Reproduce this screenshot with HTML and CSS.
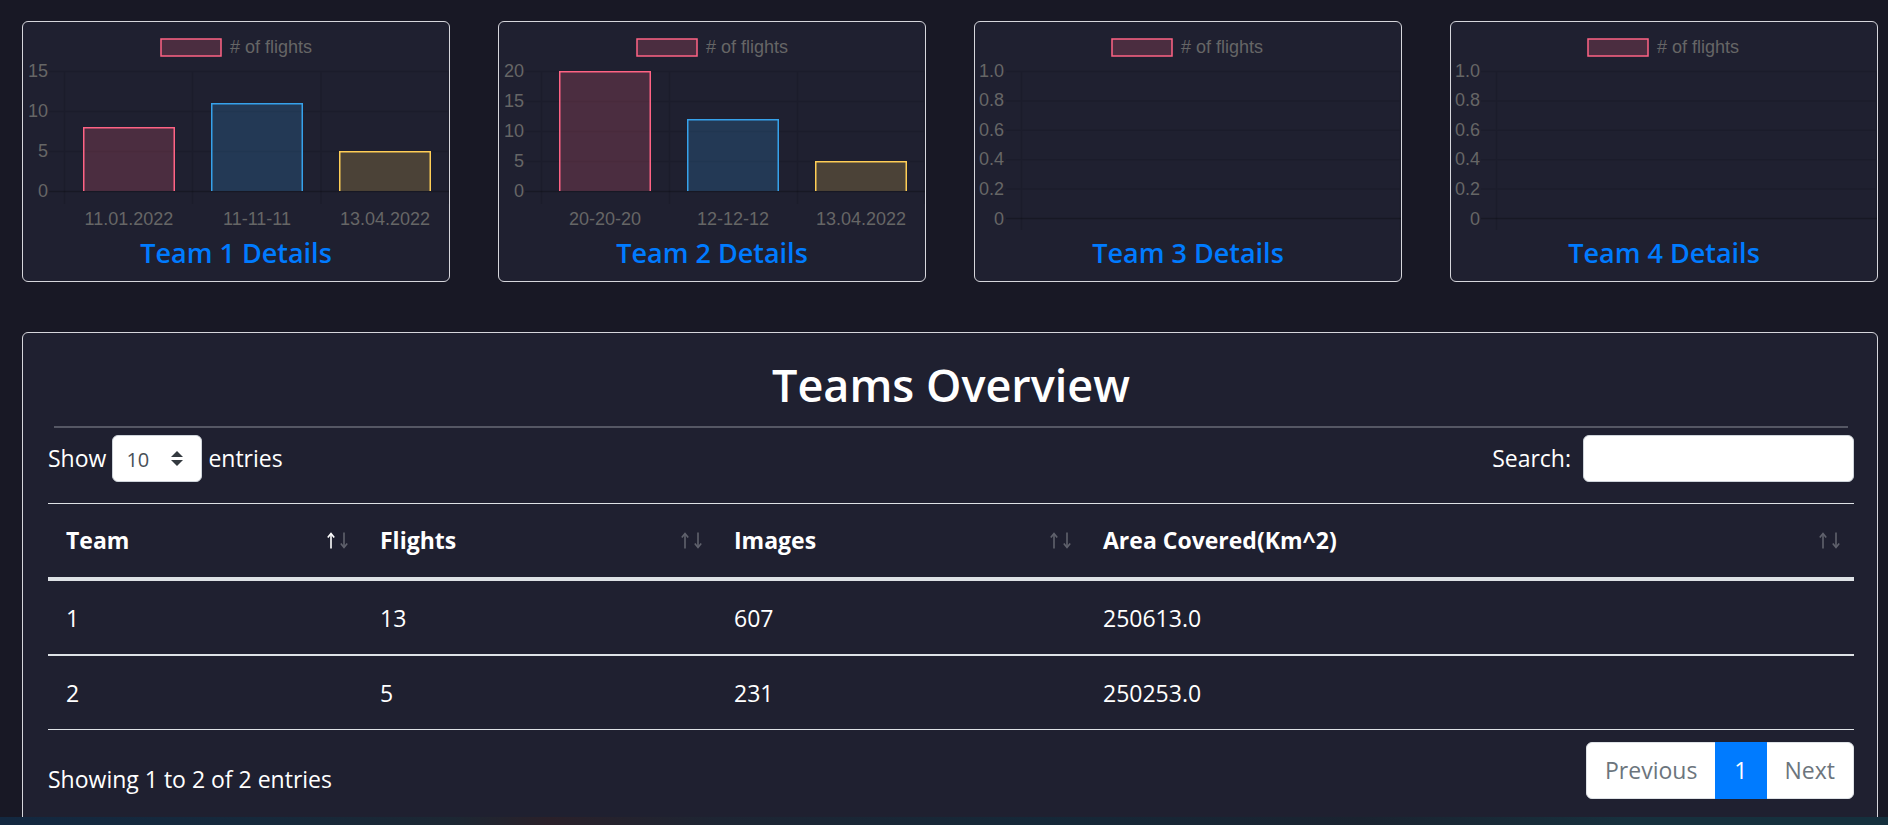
FILE: index.html
```html
<!DOCTYPE html>
<html lang="en">
<head>
<meta charset="utf-8">
<title>Teams Overview</title>
<link rel="stylesheet" href="styles.css">
</head>
<body>
<div class="page">
  <div class="team-cards">
    <div class="team-card">
      <svg class="chart" width="426" height="214" viewBox="0 0 426 214">
        <rect class="lg-box" x="138" y="17" width="60" height="17"/>
        <text class="lg" x="207" y="30.5"># of flights</text>
        <path class="grid" d="M26 49.5H426M26 89.5H426M26 129.5H426M41.5 49V182M169.5 49V182M298 49V182M425.5 49V182"/>
        <path class="zero" d="M26 169.5H426"/>
        <rect class="f1" x="60" y="105" width="92" height="64"/>
        <path class="s1" d="M60.75 169V105.75H151.25V169"/>
        <rect class="f2" x="188" y="81" width="92" height="88"/>
        <path class="s2" d="M188.75 169V81.75H279.25V169"/>
        <rect class="f3" x="316" y="129" width="92" height="40"/>
        <path class="s3" d="M316.75 169V129.75H407.25V169"/>
        <text class="yt" x="25" y="54.5">15</text>
        <text class="yt" x="25" y="94.5">10</text>
        <text class="yt" x="25" y="134.5">5</text>
        <text class="yt" x="25" y="174.5">0</text>
        <text class="xt" x="106" y="202.5">11.01.2022</text>
        <text class="xt" x="234" y="202.5">11-11-11</text>
        <text class="xt" x="362" y="202.5">13.04.2022</text>
      </svg>
      <a class="team-link" href="#">Team 1 Details</a>
    </div>
    <div class="team-card">
      <svg class="chart" width="426" height="214" viewBox="0 0 426 214">
        <rect class="lg-box" x="138" y="17" width="60" height="17"/>
        <text class="lg" x="207" y="30.5"># of flights</text>
        <path class="grid" d="M26 49.5H426M26 79.5H426M26 109.5H426M26 139.5H426M42.5 49V182M170.5 49V182M298.5 49V182M425.5 49V182"/>
        <path class="zero" d="M26 169.5H426"/>
        <rect class="f1" x="60" y="49" width="92" height="120"/>
        <path class="s1" d="M60.75 169V49.75H151.25V169"/>
        <rect class="f2" x="188" y="97" width="92" height="72"/>
        <path class="s2" d="M188.75 169V97.75H279.25V169"/>
        <rect class="f3" x="316" y="139" width="92" height="30"/>
        <path class="s3" d="M316.75 169V139.75H407.25V169"/>
        <text class="yt" x="25" y="54.5">20</text>
        <text class="yt" x="25" y="84.5">15</text>
        <text class="yt" x="25" y="114.5">10</text>
        <text class="yt" x="25" y="144.5">5</text>
        <text class="yt" x="25" y="174.5">0</text>
        <text class="xt" x="106" y="202.5">20-20-20</text>
        <text class="xt" x="234" y="202.5">12-12-12</text>
        <text class="xt" x="362" y="202.5">13.04.2022</text>
      </svg>
      <a class="team-link" href="#">Team 2 Details</a>
    </div>
    <div class="team-card">
      <svg class="chart" width="426" height="214" viewBox="0 0 426 214">
        <rect class="lg-box" x="137" y="17" width="60" height="17"/>
        <text class="lg" x="206" y="30.5"># of flights</text>
        <path class="grid" d="M31 49.5H426M31 78.9H426M31 108.3H426M31 137.7H426M31 167.1H426M46.5 49V208M425.5 49V208"/>
        <path class="zero" d="M31 196.5H426"/>
        <text class="yt" x="29" y="55">1.0</text>
        <text class="yt" x="29" y="84.4">0.8</text>
        <text class="yt" x="29" y="113.8">0.6</text>
        <text class="yt" x="29" y="143.2">0.4</text>
        <text class="yt" x="29" y="172.6">0.2</text>
        <text class="yt" x="29" y="202.5">0</text>
      </svg>
      <a class="team-link" href="#">Team 3 Details</a>
    </div>
    <div class="team-card">
      <svg class="chart" width="426" height="214" viewBox="0 0 426 214">
        <rect class="lg-box" x="137" y="17" width="60" height="17"/>
        <text class="lg" x="206" y="30.5"># of flights</text>
        <path class="grid" d="M30 49.5H426M30 78.9H426M30 108.3H426M30 137.7H426M30 167.1H426M45.5 49V208M425.5 49V208"/>
        <path class="zero" d="M30 196.5H426"/>
        <text class="yt" x="29" y="55">1.0</text>
        <text class="yt" x="29" y="84.4">0.8</text>
        <text class="yt" x="29" y="113.8">0.6</text>
        <text class="yt" x="29" y="143.2">0.4</text>
        <text class="yt" x="29" y="172.6">0.2</text>
        <text class="yt" x="29" y="202.5">0</text>
      </svg>
      <a class="team-link" href="#">Team 4 Details</a>
    </div>
  </div>

  <section class="overview">
    <h1 class="overview-title">Teams Overview</h1>
    <hr class="overview-rule">
    <div class="dt-controls">
      <div class="dt-length">
        <span>Show</span>
        <span class="dt-select"><span class="dt-select-val">10</span>
          <svg class="dt-caret" width="12" height="15" viewBox="0 0 12 15"><path d="M6 0L12 6H0Z"/><path d="M0 9H12L6 15Z"/></svg>
        </span>
        <span>entries</span>
      </div>
      <div class="dt-search">
        <span>Search:</span>
        <input class="dt-input" type="search" aria-label="Search">
      </div>
    </div>
    <table class="dt-table">
      <colgroup><col class="col-team"><col class="col-flights"><col class="col-images"><col></colgroup>
      <thead>
        <tr>
          <th><div class="th-in"><span>Team</span>
            <svg class="sort" width="22" height="17" viewBox="0 0 22 17"><g class="up on"><path d="M4 16.5V2"/><path d="M0.8 5.6L4 1.5L7.2 5.6"/></g><g class="dn"><path d="M17 0.5V15"/><path d="M13.8 11.4L17 15.5L20.2 11.4"/></g></svg>
          </div></th>
          <th><div class="th-in"><span>Flights</span>
            <svg class="sort" width="22" height="17" viewBox="0 0 22 17"><g class="up"><path d="M4 16.5V2"/><path d="M0.8 5.6L4 1.5L7.2 5.6"/></g><g class="dn"><path d="M17 0.5V15"/><path d="M13.8 11.4L17 15.5L20.2 11.4"/></g></svg>
          </div></th>
          <th><div class="th-in"><span>Images</span>
            <svg class="sort" width="22" height="17" viewBox="0 0 22 17"><g class="up"><path d="M4 16.5V2"/><path d="M0.8 5.6L4 1.5L7.2 5.6"/></g><g class="dn"><path d="M17 0.5V15"/><path d="M13.8 11.4L17 15.5L20.2 11.4"/></g></svg>
          </div></th>
          <th><div class="th-in"><span>Area Covered(Km^2)</span>
            <svg class="sort" width="22" height="17" viewBox="0 0 22 17"><g class="up"><path d="M4 16.5V2"/><path d="M0.8 5.6L4 1.5L7.2 5.6"/></g><g class="dn"><path d="M17 0.5V15"/><path d="M13.8 11.4L17 15.5L20.2 11.4"/></g></svg>
          </div></th>
        </tr>
      </thead>
      <tbody>
        <tr><td>1</td><td>13</td><td>607</td><td>250613.0</td></tr>
        <tr><td>2</td><td>5</td><td>231</td><td>250253.0</td></tr>
      </tbody>
    </table>
    <div class="dt-footer">
      <div class="dt-info">Showing 1 to 2 of 2 entries</div>
      <ul class="pager">
        <li class="pager-item disabled"><a class="pager-link" href="#">Previous</a></li>
        <li class="pager-item active"><a class="pager-link" href="#">1</a></li>
        <li class="pager-item disabled"><a class="pager-link" href="#">Next</a></li>
      </ul>
    </div>
  </section>
</div>
<div class="taskbar-edge"></div>
</body>
</html>
```

FILE: styles.css
```css
* { box-sizing: border-box; }

html, body { margin: 0; }

body {
  background: #181825;
  color: #fff;
  font-family: "Open Sans", "Noto Sans", sans-serif;
  font-size: 23px;
  line-height: 1.5;
  height: 825px;
  overflow: hidden;
}

.page {
  padding: 21px 10px 0 22px;
}

/* ---------- team cards ---------- */
.team-cards {
  display: grid;
  grid-template-columns: repeat(4, 1fr);
  column-gap: 48px;
}

.team-card {
  height: 261px;
  background: #1f2030;
  border: 1px solid #d6d6dc;
  border-radius: 6px;
  display: flex;
  flex-direction: column;
  overflow: hidden;
}

.chart {
  display: block;
  width: 426px;
  height: 214px;
  flex: none;
}

.chart text {
  font-family: "Liberation Sans", Arial, sans-serif;
  font-size: 18px;
  fill: #666;
}

.chart .yt { text-anchor: end; }
.chart .xt { text-anchor: middle; }

.lg-box {
  fill: rgba(255, 99, 132, 0.2);
  stroke: rgb(255, 99, 132);
  stroke-width: 1.5;
}

.grid {
  fill: none;
  stroke: rgba(0, 0, 0, 0.1);
  stroke-width: 1.5;
}

.zero {
  fill: none;
  stroke: rgba(0, 0, 0, 0.25);
  stroke-width: 1.5;
}

.f1 { fill: rgba(255, 99, 132, 0.2); }
.f2 { fill: rgba(54, 162, 235, 0.2); }
.f3 { fill: rgba(255, 206, 86, 0.2); }

.s1, .s2, .s3 { fill: none; stroke-width: 1.5; }
.s1 { stroke: rgb(255, 99, 132); }
.s2 { stroke: rgb(54, 162, 235); }
.s3 { stroke: rgb(255, 206, 86); }

.team-link {
  display: block;
  text-align: center;
  color: #007bff;
  font-size: 27px;
  font-weight: 600;
  line-height: 34px;
  text-decoration: none;
}

/* ---------- overview ---------- */
.overview {
  margin-top: 50px;
  background: #1f2030;
  border: 1px solid #d6d6dc;
  border-radius: 6px;
  padding: 24px 23px 60px 25px;
}

.overview-title {
  margin: 0;
  text-align: center;
  font-size: 45px;
  font-weight: 600;
  line-height: 55px;
}

.overview-rule {
  margin: 14px 6px 0;
  border: 0;
  height: 2px;
  background: #555764;
}

.dt-controls {
  margin-top: 7px;
  height: 47px;
  display: flex;
  justify-content: space-between;
  align-items: center;
}

.dt-length {
  display: flex;
  align-items: center;
  gap: 6px;
}

.dt-select {
  width: 90px;
  height: 47px;
  background: #fff;
  border: 1px solid #ced4da;
  border-radius: 6px;
  display: flex;
  align-items: center;
  justify-content: space-between;
  padding: 0 18px 0 13px;
  color: #495057;
  font-size: 20px;
}

.dt-select-val { padding-top: 3px; }

.dt-caret path { fill: #343a40; }

.dt-search {
  display: flex;
  align-items: center;
  gap: 12px;
}

.dt-input {
  width: 271px;
  height: 47px;
  background: #fff;
  border: 1px solid #ced4da;
  border-radius: 6px;
  font: inherit;
}

.dt-table {
  margin-top: 21px;
  width: 100%;
  border-collapse: collapse;
  table-layout: fixed;
}

.col-team { width: 314px; }
.col-flights { width: 354px; }
.col-images { width: 369px; }

.dt-table th {
  text-align: left;
  font-weight: 700;
  line-height: 34px;
  padding: 19px 13px 20px 18px;
  border-top: 1px solid #dee2e6;
  border-bottom: 4px solid #dee2e6;
}

.th-in {
  display: flex;
  justify-content: space-between;
  align-items: center;
}

.sort { flex: none; }
.sort path {
  fill: none;
  stroke: #60626d;
  stroke-width: 1.6;
}
.sort .on path { stroke: #fff; }

.dt-table td {
  line-height: 34px;
  padding: 20px 18px 19px 18px;
}

.dt-table tbody tr + tr td { border-top: 2px solid #dee2e6; }
.dt-table tbody tr:last-child td { border-bottom: 1px solid #dee2e6; }

.dt-footer {
  margin-top: 12px;
  display: flex;
  justify-content: space-between;
  align-items: flex-start;
}

.dt-info {
  padding-top: 20px;
  line-height: 34px;
}

.pager {
  display: flex;
  list-style: none;
  margin: 0;
  padding: 0;
}

.pager-link {
  display: flex;
  align-items: center;
  height: 57px;
  padding: 0 18px;
  background: #fff;
  border: 1px solid #dee2e6;
  color: #6c757d;
  text-decoration: none;
}

.pager-item + .pager-item .pager-link { margin-left: -1px; }

.pager-item:first-child .pager-link { border-radius: 6px 0 0 6px; }
.pager-item:last-child .pager-link { border-radius: 0 6px 6px 0; }

.pager-item.active .pager-link {
  background: #007bff;
  border-color: #007bff;
  color: #fff;
  position: relative;
}

.taskbar-edge {
  position: fixed;
  left: 0;
  right: 0;
  bottom: 0;
  height: 8px;
  background: linear-gradient(90deg, #132840 0%, #16293b 14%, #1c2733 24%, #2a2029 29%, #1d2533 38%, #152838 55%, #1a2330 72%, #17303d 86%, #15303d 100%);
}
```
